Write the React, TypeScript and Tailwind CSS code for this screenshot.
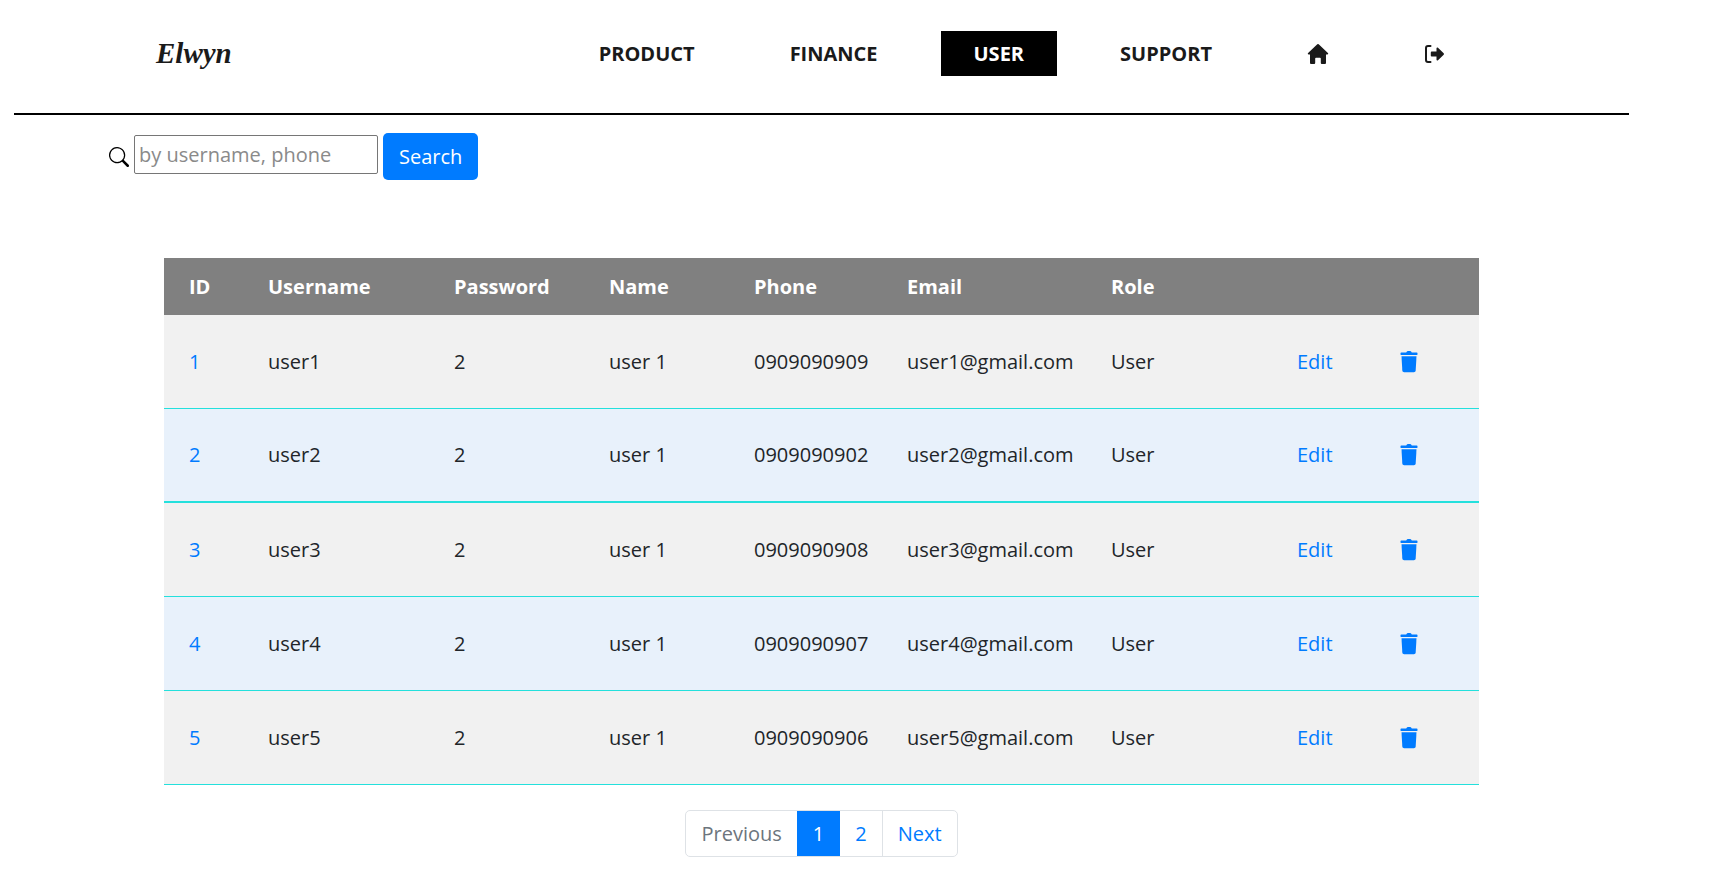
import React from "react";
import { BsSearch } from "react-icons/bs";

type User = { id: number; username: string; password: string; name: string; phone: string; email: string; role: string };

const users: User[] = [
  { id: 1, username: "user1", password: "2", name: "user 1", phone: "0909090909", email: "user1@gmail.com", role: "User" },
  { id: 2, username: "user2", password: "2", name: "user 1", phone: "0909090902", email: "user2@gmail.com", role: "User" },
  { id: 3, username: "user3", password: "2", name: "user 1", phone: "0909090908", email: "user3@gmail.com", role: "User" },
  { id: 4, username: "user4", password: "2", name: "user 1", phone: "0909090907", email: "user4@gmail.com", role: "User" },
  { id: 5, username: "user5", password: "2", name: "user 1", phone: "0909090906", email: "user5@gmail.com", role: "User" },
];

const columns = [
  { label: "ID", width: "w-[79px]" },
  { label: "Username", width: "w-[186px]" },
  { label: "Password", width: "w-[155px]" },
  { label: "Name", width: "w-[145px]" },
  { label: "Phone", width: "w-[153px]" },
  { label: "Email", width: "w-[204px]" },
  { label: "Role", width: "w-[186px]" },
  { label: "", width: "w-[103px]" },
  { label: "", width: "w-[104px]" },
];

function HomeIcon() {
  return (
    <svg viewBox="0 0 22 22" className="size-[22px]" fill="currentColor" aria-hidden="true">
      <path d="M10.300 1.300a1 1 0 0 1 1.400 0l9.200 8.700c.6.600.3 1.500-.6 1.500H19v8.300c0 .8-.5 1.300-1.300 1.300h-2.600c-.8 0-1.300-.5-1.300-1.300v-4.300c0-.5-.3-.8-.8-.8H9c-.5 0-.8.300-.8.800v4.300c0 .8-.5 1.300-1.300 1.300H4.300c-.8 0-1.300-.5-1.300-1.300v-8.300H1.700c-.9 0-1.200-.9-.6-1.500z" />
    </svg>
  );
}

function LogoutIcon() {
  return (
    <svg viewBox="0 0 22 22" className="size-[22px]" aria-hidden="true">
      <path d="M6.500 3H4A2 2 0 0 0 2 5v12a2 2 0 0 0 2 2h2.500" fill="none" stroke="currentColor" strokeWidth="2" strokeLinecap="round" />
      <path fill="currentColor" d="M12.500 5.300c0-.8.900-1.100 1.500-.5l5.700 5.500c.4.400.4 1 0 1.400L14 17.200c-.6.600-1.500.3-1.500-.5v-3.100H8c-.7 0-1.200-.4-1.200-1.100v-3c0-.7.500-1.100 1.200-1.100h4.500z" />
    </svg>
  );
}

function TrashIcon() {
  return (
    <svg viewBox="0 0 18 22" className="h-[22px] w-[18px]" fill="currentColor" aria-hidden="true">
      <path d="M6.200 1.500 6.700.8C7 .3 7.300 0 7.900 0h2.200c.6 0 .9.300 1.200.8l.5.7h5c.4 0 .7.300.7.700v1.300c0 .3-.2.500-.5.500H1c-.3 0-.5-.2-.5-.5V2.200c0-.4.3-.7.700-.7z" />
      <path d="M1.500 5.300h15l-.8 14.200c-.1 1-.9 1.700-1.900 1.700H4.200c-1 0-1.800-.7-1.900-1.700z" />
    </svg>
  );
}

const navItem = "flex h-[45px] items-center px-8 uppercase";

export default function App() {
  return (
    <div className="bg-white font-['Open_Sans','Noto_Sans',sans-serif] text-xl leading-[30px] font-normal text-[#212529]">
      <header className="mr-[85px] ml-3.5 flex h-[115px] items-start justify-between border-b-2 border-black pt-[31px] pr-[151px] pl-[142px] text-[#1a1a1a]">
        <a href="#" className="font-['Liberation_Serif',serif] text-[29px] leading-[45px] font-bold italic">Elwyn</a>
        <nav className="flex gap-[31px] font-bold">
          <a href="#product" className={navItem}>Product</a>
          <a href="#finance" className={navItem}>Finance</a>
          <a href="#user" aria-current="page" className="flex h-[45px] items-center bg-black px-[33px] text-white uppercase">User</a>
          <a href="#support" className={navItem}>Support</a>
          <a href="#home" aria-label="Home" className={navItem}><HomeIcon /></a>
          <a href="#logout" aria-label="Log out" className={navItem}><LogoutIcon /></a>
        </nav>
      </header>

      <form className="mt-[18px] ml-[109px] flex items-center gap-[5px]" onSubmit={(e) => e.preventDefault()}>
        <label htmlFor="search"><BsSearch className="size-5 text-black" title="Search users" /></label>
        <input id="search" type="text" placeholder="by username, phone" className="mb-1 h-[39px] w-[244px] rounded-[2px] border border-[#767676] px-1 placeholder:text-[#8a8a8a]" />
        <button type="submit" className="h-[47px] rounded-[5px] bg-[#007bff] px-4 text-white">Search</button>
      </form>

      <main className="mt-[78px] mr-[235px] ml-[164px]">
        <table className="w-full table-fixed border-separate border-spacing-0 text-left text-[#212529]">
          <colgroup>
            {columns.map((c, i) => <col key={i} className={c.width} />)}
          </colgroup>
          <thead>
            <tr className="h-[57px] bg-[#808080] font-bold text-white">
              {columns.map((c, i) => <th key={i} className="p-0 pl-[25px]">{c.label}</th>)}
            </tr>
          </thead>
          <tbody>
            {users.map((u) => (
              <tr key={u.id} className="h-[94px] bg-[#f1f1f1] even:bg-[#e8f1fb] [&>td]:border-b [&>td]:border-[#24e0dc] [&>td]:p-0 [&>td]:pl-[25px] [&:nth-child(2)>td]:border-b-2">
                <td><a href={`#user-${u.id}`} className="text-[#007bff]">{u.id}</a></td>
                <td>{u.username}</td>
                <td>{u.password}</td>
                <td>{u.name}</td>
                <td>{u.phone}</td>
                <td>{u.email}</td>
                <td>{u.role}</td>
                <td><a href={`#edit-${u.id}`} className="text-[#007bff]">Edit</a></td>
                <td><button type="button" aria-label={`Delete ${u.username}`} className="flex items-center text-[#007bff]"><TrashIcon /></button></td>
              </tr>
            ))}
          </tbody>
        </table>

        <nav aria-label="Pages" className="mt-[25px] flex justify-center">
          <ul className="flex h-[47px] overflow-hidden rounded-[5px] border border-[#dee2e6] text-[#007bff]">
            <li className="flex"><button type="button" disabled className="px-[15px] text-[#6c757d]">Previous</button></li>
            <li className="-my-px flex"><a href="#page-1" aria-current="page" className="flex items-center bg-[#007bff] px-4 text-white">1</a></li>
            <li className="flex border-r border-[#dee2e6]"><a href="#page-2" className="flex items-center px-[15px]">2</a></li>
            <li className="flex"><a href="#page-next" className="flex items-center px-[15px]">Next</a></li>
          </ul>
        </nav>
      </main>
    </div>
  );
}
